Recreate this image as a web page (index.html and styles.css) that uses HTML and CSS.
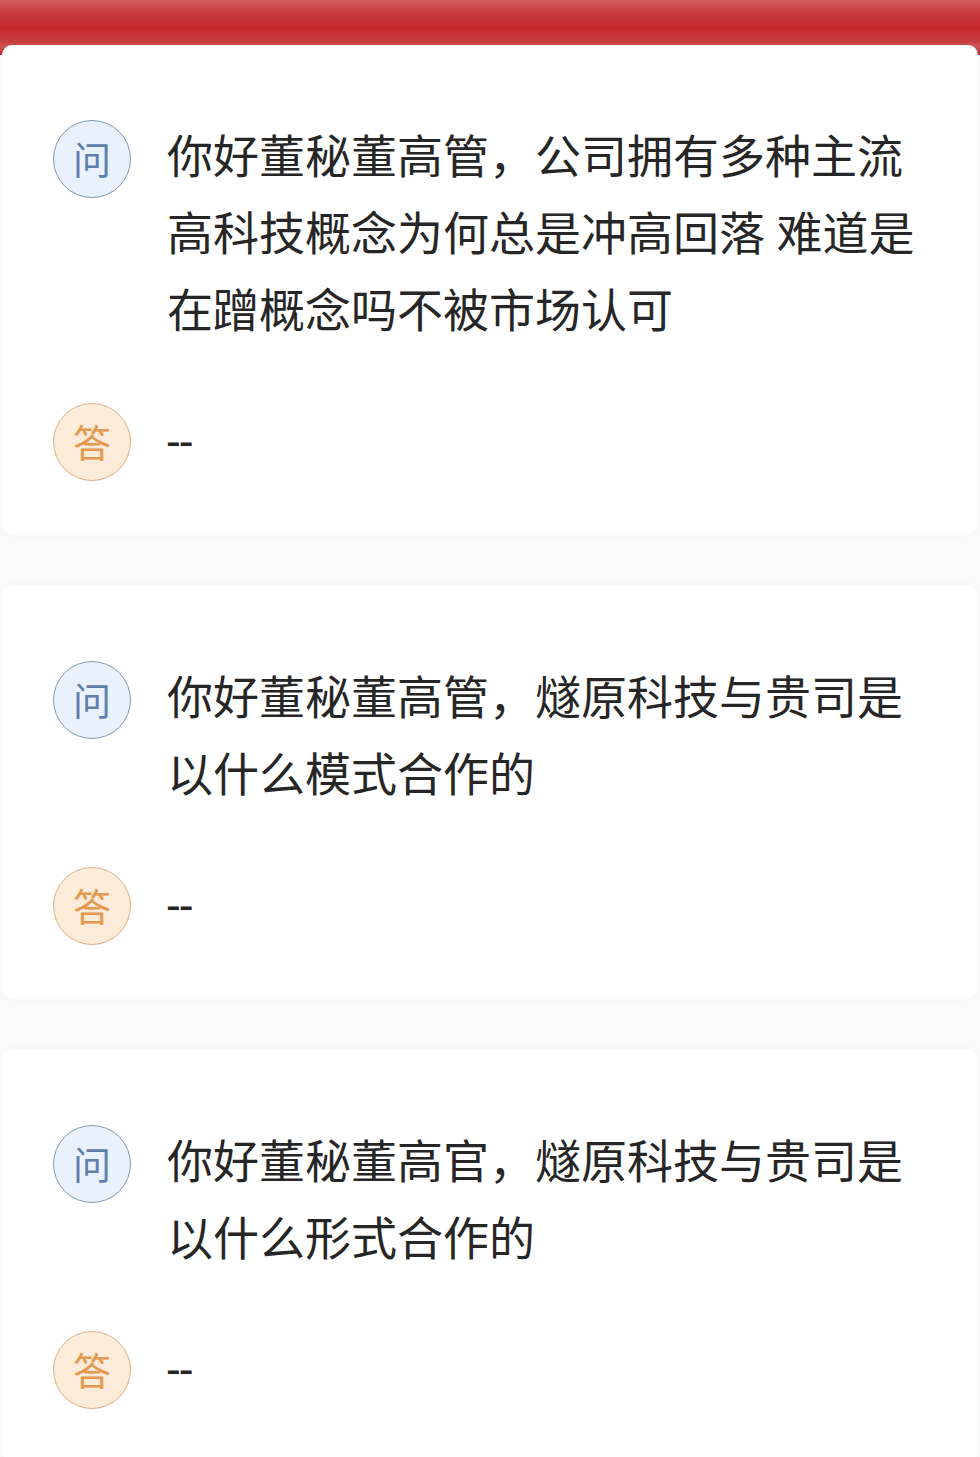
FILE: index.html
```html
<!DOCTYPE html>
<html lang="zh-CN">
<head>
  <meta charset="UTF-8">
  <title>问答</title>
  <link rel="stylesheet" href="styles.css">
</head>
<body>

  <div class="top-bar"></div>

  <div class="list">
    <div class="card">
      <div class="row">
        <span class="badge badge-q">问</span>
        <p class="question">你好董秘董高管，公司拥有多种主流高科技概念为何总是冲高回落 难道是在蹭概念吗不被市场认可</p>
      </div>
      <div class="row answer-row">
        <span class="badge badge-a">答</span>
        <p class="answer">--</p>
      </div>
    </div>

    <div class="card">
      <div class="row">
        <span class="badge badge-q">问</span>
        <p class="question">你好董秘董高管，燧原科技与贵司是以什么模式合作的</p>
      </div>
      <div class="row answer-row">
        <span class="badge badge-a">答</span>
        <p class="answer">--</p>
      </div>
    </div>

    <div class="card">
      <div class="row">
        <span class="badge badge-q">问</span>
        <p class="question">你好董秘董高官，燧原科技与贵司是以什么形式合作的</p>
      </div>
      <div class="row answer-row">
        <span class="badge badge-a">答</span>
        <p class="answer">--</p>
      </div>
    </div>
  </div>

</body>
</html>
```

FILE: styles.css
```css
body {
  margin: 0;
  font-family: "Roboto", "Noto Sans CJK SC", sans-serif;
  background: #fbfbfb;
  color: #262626;
}
.top-bar {
  height: 55px;
  background: linear-gradient(to bottom, #d25e61 0%, #c8393c 25%, #c62a2e 50%, #c8393c 72%, #cd5658 85%, #c62a2e 100%);
}
.list {
  margin-top: -10px;
  padding: 0 2px;
  display: flex;
  flex-direction: column;
  gap: 53px;
}
.card {
  background: #fff;
  border-radius: 10px;
  padding: 75px 41px 52px 51px;
  box-shadow: 0 0 12px rgba(0, 0, 0, 0.03);
}
.row {
  display: flex;
  align-items: flex-start;
  gap: 36px;
}
.answer-row {
  margin-top: 53px;
}
.badge {
  flex: none;
  box-sizing: border-box;
  width: 78px;
  height: 78px;
  padding-bottom: 4px;
  border-radius: 50%;
  display: flex;
  align-items: center;
  justify-content: center;
  font-size: 38px;
  font-family: "Noto Sans CJK SC", sans-serif;
}
.badge-q {
  background: #e9f1fc;
  border: 1px solid #7f97b8;
  color: #5d7fab;
}
.badge-a {
  background: #fdebd9;
  border: 1px solid #dcae86;
  color: #e3974f;
}
.question {
  margin: -1px 0 0;
  font-size: 46px;
  line-height: 77px;
}
.answer {
  margin: 0;
  font-size: 46px;
  line-height: 78px;
}
```
